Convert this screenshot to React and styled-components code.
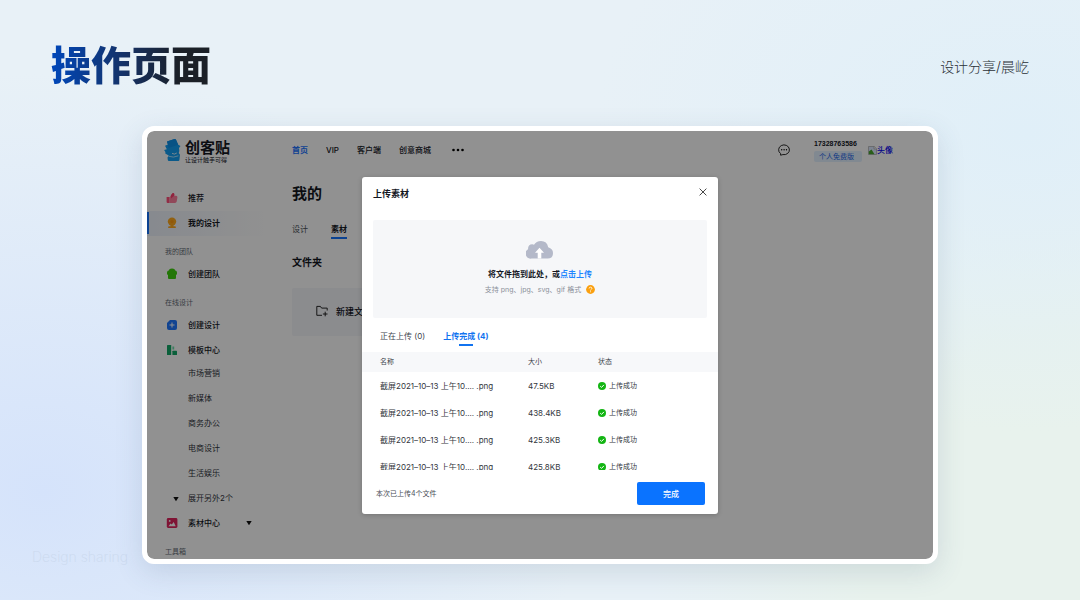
import React from 'react';
import styled, { createGlobalStyle } from 'styled-components';

const menu = [
    { type: 'link', icon: 'thumb', text: '推荐' },
    { type: 'link', icon: 'medal', text: '我的设计', active: true },
    { type: 'label', text: '我的团队' },
    { type: 'link', icon: 'team', text: '创建团队' },
    { type: 'label', text: '在线设计' },
    { type: 'link', icon: 'plus', text: '创建设计' },
    { type: 'link', icon: 'board', text: '模板中心' },
    { type: 'sub', items: ['市场营销', '新媒体', '商务办公', '电商设计', '生活娱乐'] },
    { type: 'link', icon: 'photo', text: '素材中心', arrow: true },
    { type: 'label', text: '工具箱' },
];

const files = [
    { id: 1, name: '截屏2021–10–13 上午10.... .png', size: '47.5KB' },
    { id: 2, name: '截屏2021–10–13 上午10.... .png', size: '438.4KB' },
    { id: 3, name: '截屏2021–10–13 上午10.... .png', size: '425.3KB' },
    { id: 4, name: '截屏2021–10–13 上午10.... .png', size: '425.8KB' },
];

const icons = {
    thumb: (
        <g>
            <path d="M.6 5h3v6H1.600Q.6 11 .6 10z" fill="#ff4f79" />
            <path d="M3.600 5.200 6.200 1.400Q7.800.6 8.300 2L8.200 3.800h2q1.400.1 1.200 1.600l-.7 4.200Q10.400 11 9 11H3.600z" fill="#ff7f9d" />
            <path d="M6.200 1.400Q7.800.6 8.300 2L8.200 3.800 5 6.500V3.200z" fill="#ff3f6e" />
        </g>
    ),
    medal: (
        <g fill="#ffa91f">
            <circle cx="6" cy="4.600" r="4.200" />
            <path d="M4.600 7.500h2.800v1.700H9q.8 0 .8.800v1H2.200v-1q0-.8.8-.8h1.600z" />
            <circle cx="6" cy="4.600" r="1.600" fill="#ff9a10" />
        </g>
    ),
    team: (
        <g fill="#3ecf0e">
            <circle cx="6" cy="4" r="3.400" />
            <path d="M1 4.500q0-2 2-2h6q2 0 2 2v1.300q0 1-1 1.200V10q0 1-1 1H3q-1 0-1-1V7Q1 6.800 1 5.800z" />
        </g>
    ),
    plus: (
        <g>
            <path d="M4 1h5q2 0 2 2v6q0 2-2 2H3Q1 11 1 9V4z" fill="#2178ff" />
            <path d="M6 3.500v5M3.500 6h5" stroke="#fff" strokeWidth="1" />
        </g>
    ),
    board: (
        <g>
            <rect x="1" y="1" width="4.200" height="10" rx=".6" fill="#12a866" />
            <path d="M6.400 2.500h1.800v3H6.400z" fill="#6fdcaa" />
            <rect x="6.400" y="6.700" width="4.600" height="4.300" rx=".6" fill="#12a866" />
        </g>
    ),
    photo: (
        <g>
            <rect x=".8" y="1" width="10.600" height="10" rx="1.400" fill="#e0245e" />
            <circle cx="3.700" cy="3.900" r=".9" fill="#fff" />
            <path d="M2.500 9.300 4.600 6.600l1.200 1 1.900-2.500 2 4.200z" fill="#fff" />
        </g>
    ),
};

const Logo = () => (
    <svg width="20" height="24" viewBox="0 0 20 24" aria-hidden="true">
        <path d="M4 3.500 11.500 1q1-.3 1.500.7l2.200 5.100 2.300 1.200-1.500 2q.8 2.800-.3 5l1.300 1.700-.6 5.300q-.1 1-1 1H6q-1.200 0-1.200-1l-.3-2.500 1.200-2-3.400-2 .1-1.500-1.300-2 2.700-.8L2 7.800l3-1.200z" fill="#149ff2" />
        <path d="M4 3.500 11.500 1q1-.3 1.500.7l2.200 5.100-9.600 3.200z" fill="#0f90e8" />
        <path d="M9 15.400q2.600 1.600 4.800-.4" stroke="#fff" strokeWidth=".8" fill="none" />
        <path d="M5.400 18.200q5 2 10-.4" stroke="#c8ecff" strokeWidth=".8" fill="none" />
    </svg>
);

const Caret = () => (
    <svg width="6" height="6" viewBox="0 0 6 6" aria-hidden="true">
        <path d="M.3 1h5.400L3 5.200z" fill="#111" />
    </svg>
);

const MenuEntry = ({ entry }) => {
    if (entry.type === 'label') return <MenuLabel>{entry.text}</MenuLabel>;
    if (entry.type === 'sub') {
        return (
            <SubMenu>
                {entry.items.map(text => <SubLink href="#" key={text}>{text}</SubLink>)}
                <MoreButton type="button"><Caret />展开另外2个</MoreButton>
            </SubMenu>
        );
    }
    return (
        <MenuLink href="#" $active={entry.active}>
            <svg width="12" height="12" viewBox="0 0 12 12" aria-hidden="true">{icons[entry.icon]}</svg>
            <span>{entry.text}</span>
            {entry.arrow && <Caret />}
        </MenuLink>
    );
};

const UploadDialog = () => (
    <Dialog role="dialog" aria-labelledby="upload-title">
        <DialogHead>
            <h2 id="upload-title">上传素材</h2>
            <CloseButton type="button" aria-label="关闭">
                <svg width="8" height="8" viewBox="0 0 8 8">
                    <path d="M.6.6l6.800 6.800M7.400.6.6 7.400" stroke="#333" strokeWidth=".9" />
                </svg>
            </CloseButton>
        </DialogHead>
        <DropZone>
            <svg width="28" height="20" viewBox="0 0 28 20" aria-hidden="true">
                <path d="M5.500 18.500A5 5 0 0 1 2 9.300Q2 4.200 6.400 4.300q.9 0 1.600.4Q10.200.9 15 .9q6 0 7.200 6.300 4.800 1.400 4.800 5.900 0 5.400-5.400 5.400z" fill="#b4b9c9" />
                <path d="M13.500 7.800l4.500 5h-2.700v5.700h-3.600v-5.700H9z" fill="#fff" />
            </svg>
            <DropText>将文件拖到此处，或<button type="button">点击上传</button></DropText>
            <DropHint>
                支持 png、jpg、svg、gif 格式
                <svg width="9" height="9" viewBox="0 0 9 9" aria-hidden="true">
                    <circle cx="4.500" cy="4.500" r="4.400" fill="#faa010" />
                    <path d="M3.100 3.500q.1-1.300 1.400-1.300t1.400 1.200q0 .7-.8 1.100-.6.3-.6 1" stroke="#fff" strokeWidth=".8" fill="none" />
                    <circle cx="4.500" cy="6.700" r=".5" fill="#fff" />
                </svg>
            </DropHint>
        </DropZone>
        <UploadTabs>
            <UploadTab type="button">正在上传 (0)</UploadTab>
            <UploadTab type="button" $active>上传完成 (4)</UploadTab>
        </UploadTabs>
        <FileList>
            <FileTable>
                <colgroup>
                    <col className="name" />
                    <col className="size" />
                    <col />
                </colgroup>
                <thead>
                    <tr><th>名称</th><th>大小</th><th>状态</th></tr>
                </thead>
                <tbody>
                    {files.map(file => (
                        <tr key={file.id}>
                            <td>{file.name}</td>
                            <td>{file.size}</td>
                            <td>
                                <Status>
                                    <svg width="8" height="8" viewBox="0 0 8 8" aria-hidden="true">
                                        <circle cx="4" cy="4" r="4" fill="#14b514" />
                                        <path d="M2.200 4.100l1.300 1.300 2.400-2.500" stroke="#fff" strokeWidth="1" fill="none" />
                                    </svg>
                                    上传成功
                                </Status>
                            </td>
                        </tr>
                    ))}
                </tbody>
            </FileTable>
        </FileList>
        <DialogFoot>
            <span>本次已上传4个文件</span>
            <DoneButton type="button">完成</DoneButton>
        </DialogFoot>
    </Dialog>
);

const App = () => {
    return (
        <React.Fragment>
            <GlobalStyle />
            <Page>
                <PageHead>
                    <h1>操作页面</h1>
                    <p>设计分享/晨屹</p>
                </PageHead>
                <Watermark>Design sharing</Watermark>
                <Frame>
                    <TopBar>
                        <Brand href="#">
                            <Logo />
                            <div>
                                <strong>创客贴</strong>
                                <small>让设计触手可得</small>
                            </div>
                        </Brand>
                        <TopNav>
                            <TopLink href="#" $active>首页</TopLink>
                            <TopLink href="#">VIP</TopLink>
                            <TopLink href="#">客户端</TopLink>
                            <TopLink href="#">创意商城</TopLink>
                            <DotsButton type="button" aria-label="更多">
                                <svg width="14" height="4" viewBox="0 0 14 4">
                                    <circle cx="1.500" cy="2" r="1.300" /><circle cx="6" cy="2" r="1.300" /><circle cx="10.500" cy="2" r="1.300" />
                                </svg>
                            </DotsButton>
                        </TopNav>
                        <DotsButton type="button" aria-label="消息">
                            <svg width="12" height="12" viewBox="0 0 12 12">
                                <path d="M2.600 11.200V9.600A5.400 4.900 0 1 1 4.900 10.600z" fill="none" stroke="#111" strokeWidth=".9" strokeLinejoin="round" />
                                <circle cx="3.700" cy="5.800" r=".7" /><circle cx="6.100" cy="5.800" r=".7" /><circle cx="8.500" cy="5.800" r=".7" />
                            </svg>
                        </DotsButton>
                        <Account>
                            <b>17328763586</b>
                            <span>个人免费版</span>
                        </Account>
                        <Avatar href="#">
                            <svg width="9" height="9" viewBox="0 0 9 9" aria-hidden="true">
                                <path d="M.5.5h5.800l2.200 2.200v5.800h-8z" fill="#dce9ff" stroke="#9a9a9a" strokeWidth=".6" />
                                <path d="M.8 8.200v-2.600l2.700-2 3 4.600z" fill="#48a52c" />
                                <path d="M6 .5v2.500h2.500" fill="#fff" stroke="#9a9a9a" strokeWidth=".6" />
                            </svg>
                            头像
                        </Avatar>
                    </TopBar>
                    <Body>
                        <SideBar>
                            {menu.map((entry, i) => <MenuEntry entry={entry} key={i} />)}
                        </SideBar>
                        <Main>
                            <h2>我的</h2>
                            <Tabs>
                                <Tab type="button">设计</Tab>
                                <Tab type="button" $active>素材</Tab>
                            </Tabs>
                            <h3>文件夹</h3>
                            <FolderButton type="button">
                                <svg width="12" height="12" viewBox="0 0 12 12" aria-hidden="true">
                                    <path d="M6 10.300H.8V1.400h3.600l1.200 1.700h5.600v2.400M9.200 6.700v4.600M6.900 9h4.600" fill="none" stroke="#111" strokeWidth=".9" />
                                </svg>
                                新建文件夹
                            </FolderButton>
                        </Main>
                    </Body>
                    <Mask>
                        <UploadDialog />
                    </Mask>
                </Frame>
            </Page>
        </React.Fragment>
    );
};
export default App;


const GlobalStyle = createGlobalStyle`
    * {
        box-sizing: border-box;
    }
    body {
        margin: 0;
        font-family: Inter, "Noto Sans CJK SC", sans-serif;
        color: #14171f;
    }
    h1, h2, h3, p {
        margin: 0;
    }
    a {
        color: inherit;
        text-decoration: none;
    }
    button {
        padding: 0;
        border: none;
        background: none;
        font: inherit;
        color: inherit;
        cursor: pointer;
    }
    svg {
        display: block;
        flex: none;
    }
`;

const Page = styled.div`
    position: relative;
    display: flex;
    flex-direction: column;
    height: 100vh;
    background:
        radial-gradient(ellipse 50% 70% at 4% 82%, #d5e3fb 0%, rgba(213, 227, 251, 0) 100%),
        radial-gradient(ellipse 40% 50% at 95% 22%, #e0eff8 0%, rgba(224, 239, 248, 0) 100%),
        radial-gradient(ellipse 40% 70% at 100% 90%, #e8f2ed 50%, rgba(232, 242, 237, 0) 100%),
        #e8f1f7;
`;

const PageHead = styled.header`
    display: flex;
    align-items: center;
    justify-content: space-between;
    padding: 36px 51px 30px;

    h1 {
        background: linear-gradient(90deg, #0047ba 0%, #17305f 50%, #1b2027 80%);
        background-clip: text;
        color: transparent;
        font-size: 40px;
        font-weight: 900;
        line-height: 60px;
    }
    p {
        color: #2a2f36;
        font-size: 14px;
        font-weight: 300;
    }
`;

const Watermark = styled.span`
    position: absolute;
    left: 32px;
    bottom: 34px;
    color: #cbd9ee;
    font-size: 14px;
    font-weight: 200;
    line-height: 18px;
`;

const Frame = styled.div`
    position: relative;
    display: flex;
    flex-direction: column;
    flex: 1;
    min-height: 0;
    margin: 0 142px 36px;
    border: 5px solid #fff;
    border-radius: 12px;
    background: #fff;
    overflow: hidden;
    box-shadow: 0 8px 28px rgba(60, 90, 120, 0.16);
`;

const TopBar = styled.header`
    display: flex;
    align-items: center;
    height: 38px;
    flex: none;
    padding: 0 40px 0 16px;
`;

const Brand = styled.a`
    display: flex;
    align-items: center;
    gap: 2px;
    width: 129px;

    div {
        display: flex;
        flex-direction: column;
        padding-top: 2px;
    }
    strong {
        font-size: 15px;
        font-weight: 700;
        line-height: 16px;
    }
    small {
        font-size: 6px;
        line-height: 7px;
    }
`;

const TopNav = styled.nav`
    display: flex;
    align-items: center;
    flex: 1;
    gap: 18px;
`;

const TopLink = styled.a`
    color: ${props => props.$active ? '#2474ff' : '#14171f'};
    font-size: 8px;
    font-weight: ${props => props.$active ? 700 : 500};
    line-height: 12px;
`;

const DotsButton = styled.button`
    display: flex;
    align-items: center;
    margin-left: 3px;
`;

const Account = styled.div`
    display: flex;
    flex-direction: column;
    gap: 2px;
    margin: 0 6px 0 24px;

    b {
        font-family: "Liberation Sans", Arial, sans-serif;
        font-size: 7px;
        line-height: 10px;
    }
    span {
        width: 48px;
        padding-left: 5px;
        border-radius: 2px;
        background: #e3f1ff;
        color: #2467e8;
        font-size: 7px;
        line-height: 11px;
    }
`;

const Avatar = styled.a`
    display: flex;
    align-items: center;
    color: #0000ee;
    font-size: 8px;
    font-weight: 500;
    line-height: 12px;
`;

const Body = styled.div`
    display: flex;
    flex: 1;
    min-height: 0;
`;

const SideBar = styled.nav`
    flex: none;
    width: 118px;
    padding-top: 17px;
`;

const MenuLink = styled.a`
    display: flex;
    align-items: center;
    height: 25px;
    padding: 0 13px 2px 19px;
    background: ${props => props.$active
        ? 'linear-gradient(#1474ff, #1474ff) 0 1px / 2px 22px no-repeat, linear-gradient(90deg, #edf2fb, #fff)'
        : 'none'};
    font-size: 8px;
    font-weight: ${props => props.$active ? 700 : 500};

    span {
        flex: 1;
        margin-left: 10px;
    }
`;

const MenuLabel = styled.div`
    height: 26px;
    padding: 11px 0 0 18px;
    color: #666c76;
    font-size: 7px;
    line-height: 10px;
`;

const SubMenu = styled.div`
    display: flex;
    flex-direction: column;
    margin-top: -2px;
    color: #30343c;
    font-size: 8px;
    line-height: 25px;
`;

const SubLink = styled.a`
    padding-left: 41px;
`;

const MoreButton = styled.button`
    display: flex;
    align-items: center;
    gap: 9px;
    padding-left: 26px;
`;

const Main = styled.main`
    flex: 1;
    min-width: 0;
    padding: 13px 27px 0;

    h2 {
        font-size: 15px;
        line-height: 24px;
    }
    h3 {
        margin: 15px 0 18px;
        font-size: 10px;
        line-height: 16px;
    }
`;

const Tabs = styled.div`
    display: flex;
    gap: 23px;
    margin-top: 13px;
`;

const Tab = styled.button`
    height: 20px;
    border-bottom: 2px solid ${props => props.$active ? '#1474ff' : 'transparent'};
    color: ${props => props.$active ? '#14171f' : '#4a4f58'};
    font-size: 8px;
    font-weight: ${props => props.$active ? 700 : 400};
`;

const FolderButton = styled.button`
    display: flex;
    align-items: center;
    gap: 8px;
    width: 180px;
    height: 48px;
    padding: 0 0 2px 24px;
    border-radius: 2px;
    background: #f5f6fa;
    font-size: 9px;
    font-weight: 500;
`;

const Mask = styled.div`
    position: absolute;
    inset: 0;
    display: flex;
    align-items: center;
    justify-content: center;
    border-radius: 7px;
    background: rgba(0, 0, 0, 0.43);
`;

const Dialog = styled.section`
    width: 100%;
    max-width: 356px;
    border-radius: 3px;
    background: #fff;
    box-shadow: 0 1px 5px rgba(0, 0, 0, 0.2);
`;

const DialogHead = styled.header`
    display: flex;
    align-items: center;
    justify-content: space-between;
    height: 34px;
    padding: 0 11px;

    h2 {
        font-size: 9px;
        line-height: 14px;
    }
`;

const CloseButton = styled.button`
    display: flex;
    padding-bottom: 3px;
`;

const DropZone = styled.div`
    display: flex;
    flex-direction: column;
    align-items: center;
    height: 98px;
    margin: 9px 11px 0;
    padding-top: 20px;
    border-radius: 2px;
    background: #f6f7f9;
`;

const DropText = styled.p`
    margin-top: 8px;
    font-size: 8px;
    font-weight: 700;
    line-height: 12px;

    button {
        color: #1f86ff;
    }
`;

const DropHint = styled.p`
    display: flex;
    align-items: center;
    gap: 5px;
    margin-top: 4px;
    color: #8b909a;
    font-size: 7px;
    line-height: 11px;
`;

const UploadTabs = styled.div`
    display: flex;
    gap: 18px;
    margin-top: 9px;
    padding: 0 18px;
`;

const UploadTab = styled.button`
    display: flex;
    flex-direction: column;
    align-items: center;
    height: 19px;
    color: ${props => props.$active ? '#1173f0' : '#40444c'};
    font-size: 8px;
    font-weight: ${props => props.$active ? 700 : 400};
    line-height: 18px;

    &::after {
        content: "";
        width: 14px;
        height: 2px;
        flex: none;
        margin-top: -1px;
        background: ${props => props.$active ? '#1173f0' : 'none'};
    }
`;

const FileList = styled.div`
    max-height: 118px;
    margin-top: 6px;
    overflow-y: auto;
    scrollbar-width: none;
`;

const FileTable = styled.table`
    width: 100%;
    table-layout: fixed;
    border-collapse: collapse;
    text-align: left;

    .name {
        width: 166px;
    }
    .size {
        width: 70px;
    }
    th, td {
        padding: 0;
        line-height: 12px;
        white-space: nowrap;
    }
    th {
        height: 20px;
        background: #f7f8fa;
        color: #40444c;
        font-size: 7px;
        font-weight: 400;
    }
    td {
        height: 27px;
        padding-top: 2px;
        color: #33363d;
        font-size: 8px;
    }
    th:first-child, td:first-child {
        padding-left: 18px;
    }
`;

const Status = styled.span`
    display: flex;
    align-items: center;
    gap: 3px;
    font-size: 7px;
`;

const DialogFoot = styled.footer`
    display: flex;
    align-items: center;
    justify-content: space-between;
    padding: 12px 13px 9px 14px;
    color: #4a4e56;
    font-size: 7px;
`;

const DoneButton = styled.button`
    width: 68px;
    height: 23px;
    border-radius: 2px;
    background: #0a73ff;
    color: #fff;
    font-size: 8px;
    font-weight: 500;
`;
